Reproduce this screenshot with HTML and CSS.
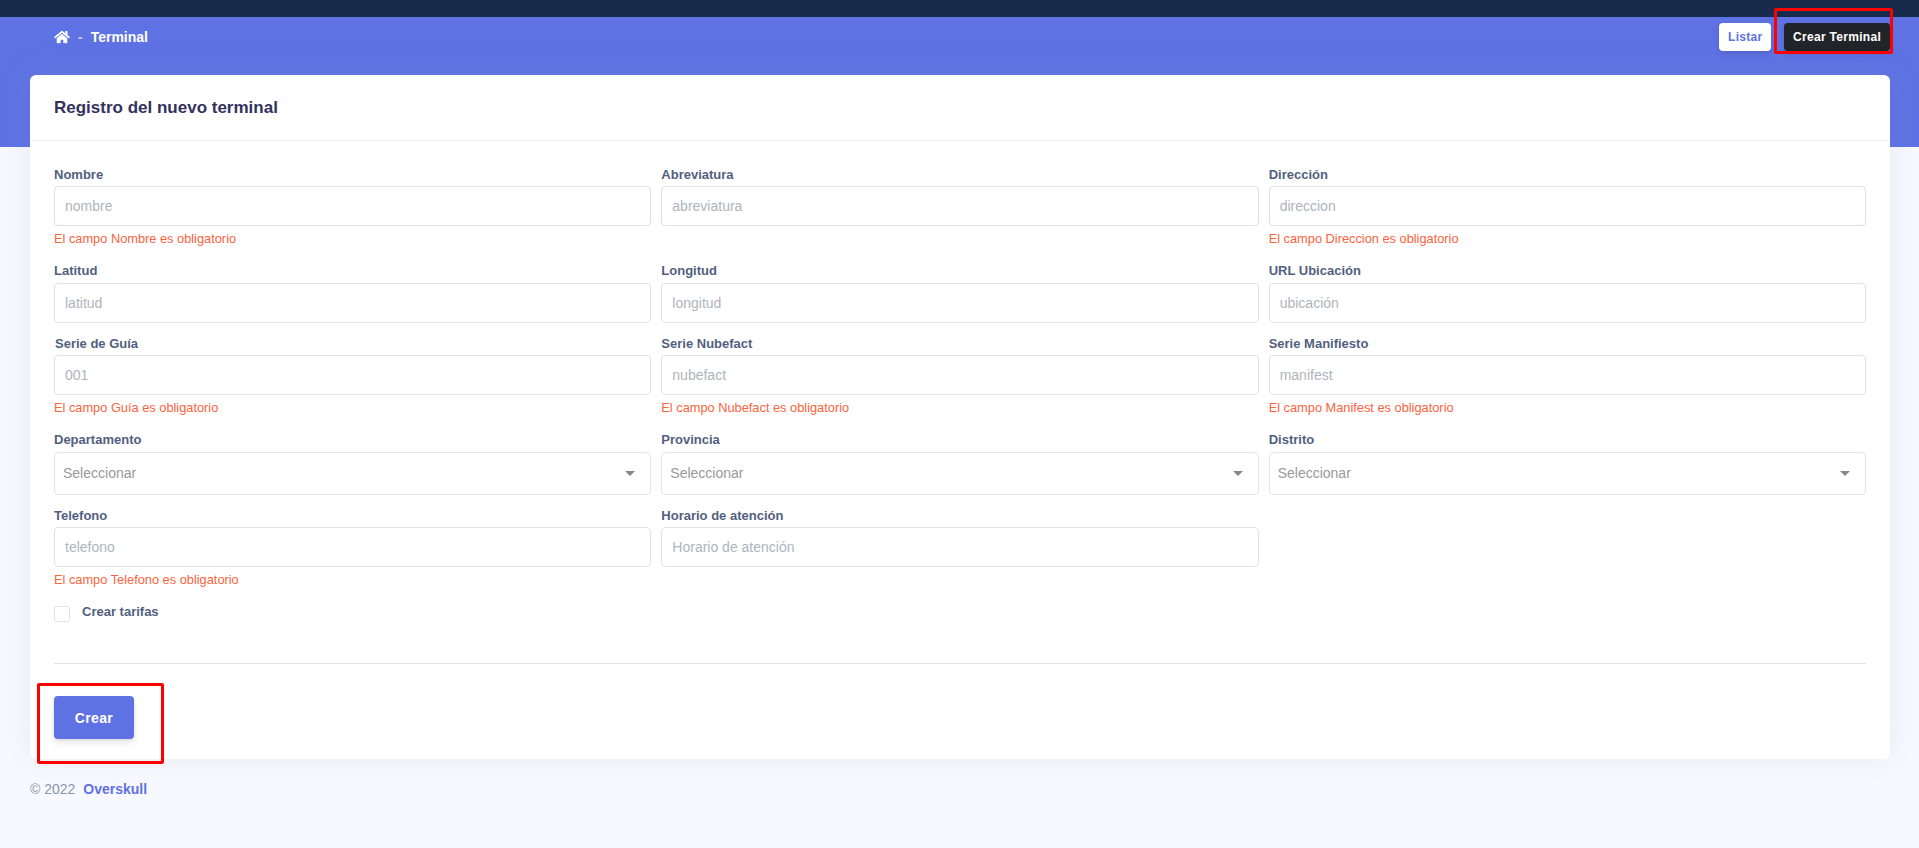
FILE: index.html
```html
<!DOCTYPE html>
<html lang="es">
<head>
<meta charset="utf-8">
<title>Terminal</title>
<link rel="stylesheet" href="styles.css">
</head>
<body>
<div class="topbar"></div>
<header class="hero">
  <nav class="crumbs">
    <svg class="home" viewBox="0 0 576 512"><path fill="#fff" d="M280.37 148.26L96 300.11V464a16 16 0 0 0 16 16l112.06-.29a16 16 0 0 0 15.92-16V368a16 16 0 0 1 16-16h64a16 16 0 0 1 16 16v95.64a16 16 0 0 0 16 16.05L464 480a16 16 0 0 0 16-16V300L295.67 148.26a12.19 12.19 0 0 0-15.3 0zM571.6 251.47L488 182.56V44.05a12 12 0 0 0-12-12h-56a12 12 0 0 0-12 12v72.61L318.47 43a48 48 0 0 0-61 0L4.34 251.47a12 12 0 0 0-1.6 16.9l25.5 31A12 12 0 0 0 45.15 301l235.22-193.74a12.19 12.19 0 0 1 15.3 0L530.9 301a12 12 0 0 0 16.9-1.6l25.5-31a12 12 0 0 0-1.7-16.93z"/></svg>
    <span class="sep">-</span>
    <span class="crumb">Terminal</span>
  </nav>
  <div class="actions">
    <a class="btn btn-light">Listar</a>
    <a class="btn btn-dark">Crear Terminal</a>
  </div>
</header>
<main class="card">
  <h1 class="card-head">Registro del nuevo terminal</h1>
  <form class="card-body">
    <div class="row r1">
      <div class="field"><label>Nombre</label><input placeholder="nombre"><p class="err">El campo Nombre es obligatorio</p></div>
      <div class="field"><label>Abreviatura</label><input placeholder="abreviatura"></div>
      <div class="field"><label>Dirección</label><input placeholder="direccion"><p class="err">El campo Direccion es obligatorio</p></div>
    </div>
    <div class="row r2">
      <div class="field"><label>Latitud</label><input placeholder="latitud"></div>
      <div class="field"><label>Longitud</label><input placeholder="longitud"></div>
      <div class="field"><label>URL Ubicación</label><input placeholder="ubicación"></div>
    </div>
    <div class="row r3">
      <div class="field"><label class="indent">Serie de Guía</label><input placeholder="001"><p class="err">El campo Guía es obligatorio</p></div>
      <div class="field"><label>Serie Nubefact</label><input placeholder="nubefact"><p class="err">El campo Nubefact es obligatorio</p></div>
      <div class="field"><label>Serie Manifiesto</label><input placeholder="manifest"><p class="err">El campo Manifest es obligatorio</p></div>
    </div>
    <div class="row r4">
      <div class="field"><label>Departamento</label><div class="select">Seleccionar<i class="caret"></i></div></div>
      <div class="field"><label>Provincia</label><div class="select">Seleccionar<i class="caret"></i></div></div>
      <div class="field"><label>Distrito</label><div class="select">Seleccionar<i class="caret"></i></div></div>
    </div>
    <div class="row r5">
      <div class="field"><label>Telefono</label><input placeholder="telefono"><p class="err">El campo Telefono es obligatorio</p></div>
      <div class="field"><label>Horario de atención</label><input placeholder="Horario de atención"></div>
    </div>
    <div class="check"><span class="box"></span><label>Crear tarifas</label></div>
    <hr class="rule">
    <button type="button" class="submit">Crear</button>
  </form>
</main>
<footer class="foot">© 2022 <a>Overskull</a></footer>
<div class="mark mark-top"></div>
<div class="mark mark-bottom"></div>
</body>
</html>
```
FILE: styles.css
```css
* { box-sizing: border-box; }
html, body { margin: 0; }
body {
  position: relative;
  height: 848px;
  overflow: hidden;
  background: #f8f9fe;
  font-family: "Liberation Sans", Arial, sans-serif;
  color: #525f7f;
}
.topbar { height: 17px; background: #172b4d; }
.hero {
  height: 130px;
  margin-bottom: -72px;
  padding: 6px 29px 0 54px;
  background: #5e72e4;
  display: flex;
  justify-content: space-between;
  align-items: flex-start;
}
.crumbs { display: flex; align-items: center; height: 27px; color: #fff; font-size: 14px; font-weight: 700; }
.home { width: 16px; height: 14px; }
.sep { margin: 0 8px; color: #c5cbe8; font-weight: 700; font-size: 14px; }
.actions { display: flex; gap: 13px; }
.btn {
  height: 28px;
  display: flex;
  align-items: center;
  border-radius: 4px;
  font-size: 12px;
  font-weight: 700;
  letter-spacing: .025em;
  padding: 0 9px;
  box-shadow: 0 4px 6px rgba(50,50,93,.11), 0 1px 3px rgba(0,0,0,.08);
}
.btn-light { background: #fff; color: #5e72e4; width: 52px; }
.btn-dark { background: #212529; color: #fff; width: 106px; }
.card {
  position: relative;
  margin: 0 29px 0 30px;
  height: 684px;
  background: #fff;
  border-radius: 6px;
  box-shadow: 0 0 32px rgba(136,152,170,.15);
}
.card-head {
  margin: 0;
  height: 66px;
  padding: 0 24px;
  display: flex;
  align-items: center;
  border-bottom: 1px solid #f2f2f4;
  font-size: 17px;
  font-weight: 700;
  color: #32325d;
}
.card-body { padding: 0 24px; }
.row {
  display: grid;
  grid-template-columns: repeat(3, 1fr);
  column-gap: 10px;
}
.r1 { height: 123px; padding-top: 26px; }
.r2 { height: 72px; }
.r3 { height: 97px; }
.r4 { height: 75px; }
.r5 { height: 91px; }
.field label {
  display: block;
  height: 19px;
  line-height: 16px;
  font-size: 13px;
  font-weight: 700;
  color: #525f7f;
}
.r2 .field label, .r4 .field label { line-height: 14px; }
.field .indent { padding-left: 1px; }
input {
  display: block;
  width: 100%;
  height: 40px;
  padding: 0 10px;
  border: 1px solid #dee2e6;
  border-radius: 4px;
  background: #fff;
  font: 14px "Liberation Sans", Arial, sans-serif;
  color: #525f7f;
  outline: none;
}
input::placeholder { color: #adb5bd; opacity: 1; }
.err { margin: 4px 0 0; font-size: 12.8px; line-height: 17px; color: #fb6340; }
.select {
  position: relative;
  height: 43px;
  padding: 0 0 2px 8px;
  display: flex;
  align-items: center;
  border: 1px solid #e3e5e9;
  border-radius: 4px;
  font-size: 14px;
  color: #999;
}
.caret {
  position: absolute;
  right: 15px;
  top: 18px;
  border-left: 5px solid transparent;
  border-right: 5px solid transparent;
  border-top: 5px solid #888;
}
.check { display: flex; align-items: flex-start; height: 64px; padding-top: 7px; }
.box { width: 16px; height: 16px; border: 1px solid #dee2e6; border-radius: 3px; background: #fff; margin-right: 12px; }
.check label { margin-top: -1px; font-size: 13px; font-weight: 700; line-height: 13px; }
.rule { margin: 0 0 32px; border: 0; border-top: 1px solid #e4e5e8; }
.submit {
  display: block;
  width: 80px;
  height: 43px;
  border: 0;
  border-radius: 4px;
  background: #5e72e4;
  color: #fff;
  font: 700 14px "Liberation Sans", Arial, sans-serif;
  letter-spacing: .025em;
  box-shadow: 0 4px 6px rgba(50,50,93,.11), 0 1px 3px rgba(0,0,0,.08);
}
.foot { margin: 22px 0 0 30px; font-size: 14px; color: #8898aa; }
.foot a { margin-left: 4px; color: #5e72e4; font-weight: 700; }
.mark { position: absolute; border: 3px solid #f00; border-radius: 2px; }
.mark-top { left: 1774px; top: 8px; width: 119px; height: 46px; }
.mark-bottom { left: 37px; top: 683px; width: 127px; height: 81px; }
```
